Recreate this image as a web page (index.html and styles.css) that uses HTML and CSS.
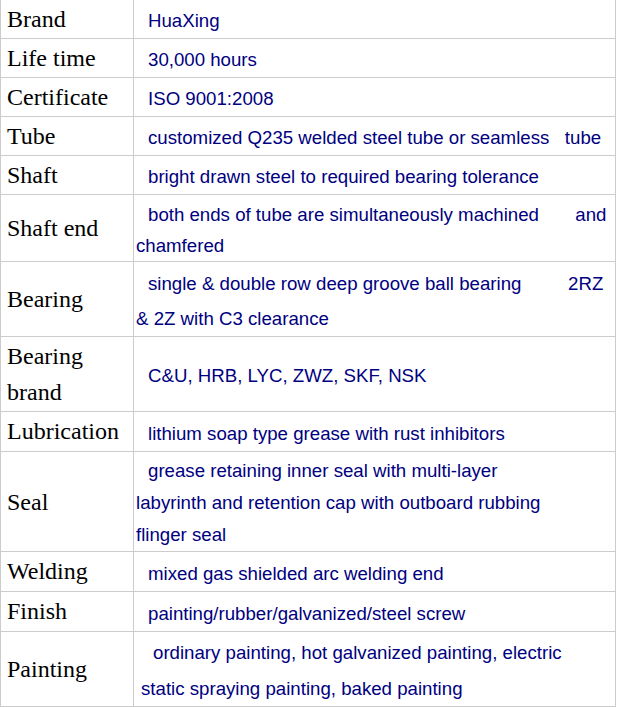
FILE: index.html
```html
<!DOCTYPE html>
<html>
<head>
<meta charset="utf-8">
<link rel="stylesheet" href="styles.css">
</head>
<body>
<table class="spec">
<colgroup><col class="c-label"><col class="c-value"></colgroup>
<tbody>
<tr><td class="label">Brand</td><td class="value">HuaXing</td></tr>
<tr><td class="label">Life time</td><td class="value">30,000 hours</td></tr>
<tr><td class="label">Certificate</td><td class="value">ISO 9001:2008</td></tr>
<tr><td class="label">Tube</td><td class="value">customized Q235 welded steel tube or seamless&nbsp;&nbsp; tube</td></tr>
<tr><td class="label">Shaft</td><td class="value">bright drawn steel to required bearing tolerance</td></tr>
<tr><td class="label">Shaft end</td><td class="value multi lh31">both ends of tube are simultaneously machined&nbsp;&nbsp;&nbsp;&nbsp;&nbsp;&nbsp; and<br>chamfered</td></tr>
<tr><td class="label">Bearing</td><td class="value multi lh35">single &amp; double row deep groove ball bearing&nbsp;&nbsp;&nbsp;&nbsp;&nbsp;&nbsp;&nbsp;&nbsp; 2RZ<br>&amp; 2Z with C3 clearance</td></tr>
<tr><td class="label">Bearing brand</td><td class="value">C&amp;U, HRB, LYC, ZWZ, SKF, NSK</td></tr>
<tr class="r40"><td class="label">Lubrication</td><td class="value">lithium soap type grease with rust inhibitors</td></tr>
<tr><td class="label">Seal</td><td class="value multi lh32 pad3">grease retaining inner seal with multi-layer<br>labyrinth and retention cap with outboard rubbing<br>flinger seal</td></tr>
<tr class="r40"><td class="label">Welding</td><td class="value">mixed gas shielded arc welding end</td></tr>
<tr class="r40"><td class="label">Finish</td><td class="value">painting/rubber/galvanized/steel screw</td></tr>
<tr><td class="label">Painting</td><td class="value multi lh355 pad3 shifted">ordinary painting, hot galvanized painting, electric<br>static spraying painting, baked painting</td></tr>
</tbody>
</table>
</body>
</html>
```
FILE: styles.css
```css
html, body {
  margin: 0;
  padding: 0;
  background: #ffffff;
}

.spec {
  border-collapse: collapse;
  table-layout: fixed;
  width: 616px;
  margin-top: -1px;
}

.c-label {
  width: 133px;
}

.spec td {
  border: 1px solid #cccccc;
  vertical-align: middle;
}

.spec td.label {
  font-family: "Liberation Serif", "Times New Roman", serif;
  font-size: 24px;
  line-height: 36px;
  color: #000000;
  padding: 1px 2px 1px 6px;
}

.spec tr.r40 td.label {
  padding-bottom: 2px;
}

.spec td.value {
  font-family: "Liberation Sans", Arial, sans-serif;
  font-size: 18.67px;
  line-height: 34px;
  color: #000080;
  text-indent: 12px;
  padding: 4px 2px 0 2px;
}

.spec td.multi {
  vertical-align: top;
}

.spec td.lh31 {
  line-height: 31px;
}

.spec td.lh32 {
  line-height: 32px;
}

.spec td.lh35 {
  line-height: 35px;
}

.spec td.lh355 {
  line-height: 35.5px;
}

.spec td.pad3 {
  padding-top: 3px;
}

.spec td.shifted {
  padding-left: 7px;
}
```
